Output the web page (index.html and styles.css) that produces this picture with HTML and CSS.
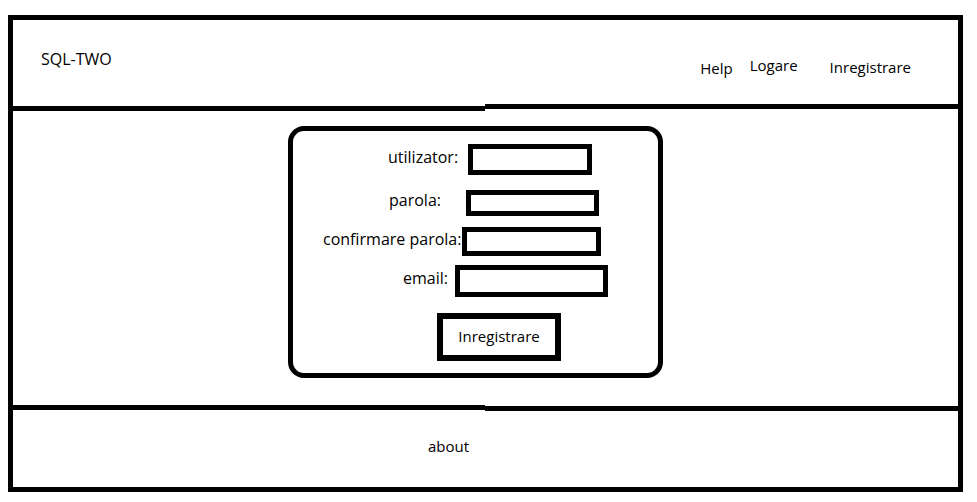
FILE: index.html
```html
<!DOCTYPE html>
<html lang="ro">
<head>
  <meta charset="UTF-8">
  <meta name="viewport" content="width=device-width, initial-scale=1.0">
  <title>SQL-TWO - Inregistrare</title>
  <link rel="stylesheet" href="styles.css">
</head>
<body>
  <div class="frame">
    <header class="header">
      <div class="brand">SQL-TWO</div>
      <nav class="nav">
        <a href="#" class="nav-link nav-help">Help</a>
        <a href="#" class="nav-link nav-login">Logare</a>
        <a href="#" class="nav-link nav-register">Inregistrare</a>
      </nav>
    </header>

    <!-- hand drawn line, the two halves don't quite meet -->
    <div class="divider divider-top">
      <span class="divider-left"></span>
      <span class="divider-right"></span>
    </div>

    <main class="main">
      <form class="card">
        <div class="field field-user">
          <label for="user">utilizator:</label>
          <input type="text" id="user">
        </div>
        <div class="field field-pass">
          <label for="pass">parola:</label>
          <input type="password" id="pass">
        </div>
        <div class="field field-confirm">
          <label for="confirm">confirmare parola:</label>
          <input type="password" id="confirm">
        </div>
        <div class="field field-email">
          <label for="email">email:</label>
          <input type="email" id="email">
        </div>
        <button type="submit" class="submit">Inregistrare</button>
      </form>
    </main>

    <div class="divider divider-bottom">
      <span class="divider-left"></span>
      <span class="divider-right"></span>
    </div>

    <footer class="footer">
      <a href="#" class="footer-link">about</a>
    </footer>
  </div>
</body>
</html>
```

FILE: styles.css
```css
*, *::before, *::after {
  margin: 0;
  padding: 0;
  box-sizing: border-box;
}

body {
  font-family: 'Open Sans', 'Liberation Sans', sans-serif;
  background-color: #fff;
  color: #000;
}

.frame {
  width: 955px;
  height: 477px;
  margin: 15px 0 0 8px;
  border: 5px solid #000;
  display: flex;
  flex-direction: column;
}

/* header */
.header {
  flex: 0 0 84px;
  display: flex;
  align-items: flex-start;
  padding: 28px 47px 0 28px;
}

.brand {
  font-size: 16px;
  line-height: 22px;
}

.nav {
  margin-left: auto;
  display: flex;
  align-items: flex-start;
  font-size: 15px;
  line-height: 22px;
}

.nav-link {
  color: #000;
  text-decoration: none;
}

.nav-help {
  margin-top: 9px;
}

.nav-login {
  margin-top: 6px;
  margin-left: 17px;
}

.nav-register {
  margin-top: 8px;
  margin-left: 32px;
}

/* dividers */
.divider {
  display: flex;
}

.divider span {
  height: 5px;
  background-color: #000;
}

.divider-left {
  flex: 0 0 472px;
}

.divider-right {
  flex: 1;
}

.divider-top {
  flex: 0 0 7px;
}

.divider-top .divider-left {
  align-self: flex-end;
}

.divider-top .divider-right {
  align-self: flex-start;
}

.divider-bottom {
  flex: 0 0 6px;
}

.divider-bottom .divider-left {
  align-self: flex-start;
}

.divider-bottom .divider-right {
  align-self: flex-end;
}

/* form */
.main {
  flex: 1;
  padding: 15px 0 0 275px;
}

.card {
  width: 375px;
  height: 252px;
  border: 5px solid #000;
  border-radius: 16px;
  padding-top: 13px;
}

.field {
  display: flex;
  align-items: center;
}

.field label {
  font-size: 16px;
  line-height: 16px;
  margin-bottom: 6px;
  white-space: nowrap;
}

.field input {
  border: 5px solid #000;
  border-radius: 0;
  background: #fff;
  outline: none;
  padding: 0 4px;
  font: inherit;
}

.field-user {
  padding-left: 95px;
}

.field-user input {
  margin-left: 10px;
  width: 124px;
  height: 31px;
}

.field-pass {
  margin-top: 15px;
  padding-left: 96px;
}

.field-pass input {
  margin-left: 25px;
  width: 133px;
  height: 26px;
}

.field-confirm {
  margin-top: 11px;
  padding-left: 30px;
}

.field-confirm input {
  margin-left: 1px;
  width: 139px;
  height: 29px;
}

.field-email {
  margin-top: 9px;
  padding-left: 110px;
}

.field-email input {
  margin-left: 7px;
  width: 153px;
  height: 32px;
}

.submit {
  display: block;
  width: 124px;
  height: 48px;
  margin: 16px 0 0 144px;
  border: 6px solid #000;
  background: #fff;
  padding: 6px 0 8px;
  font-family: inherit;
  font-size: 15px;
  line-height: 22px;
  color: #000;
  text-align: center;
  cursor: pointer;
}

/* footer */
.footer {
  flex: 0 0 76px;
  padding: 24px 0 0 415px;
  font-size: 15px;
  line-height: 22px;
}

.footer-link {
  color: #000;
  text-decoration: none;
}
```
